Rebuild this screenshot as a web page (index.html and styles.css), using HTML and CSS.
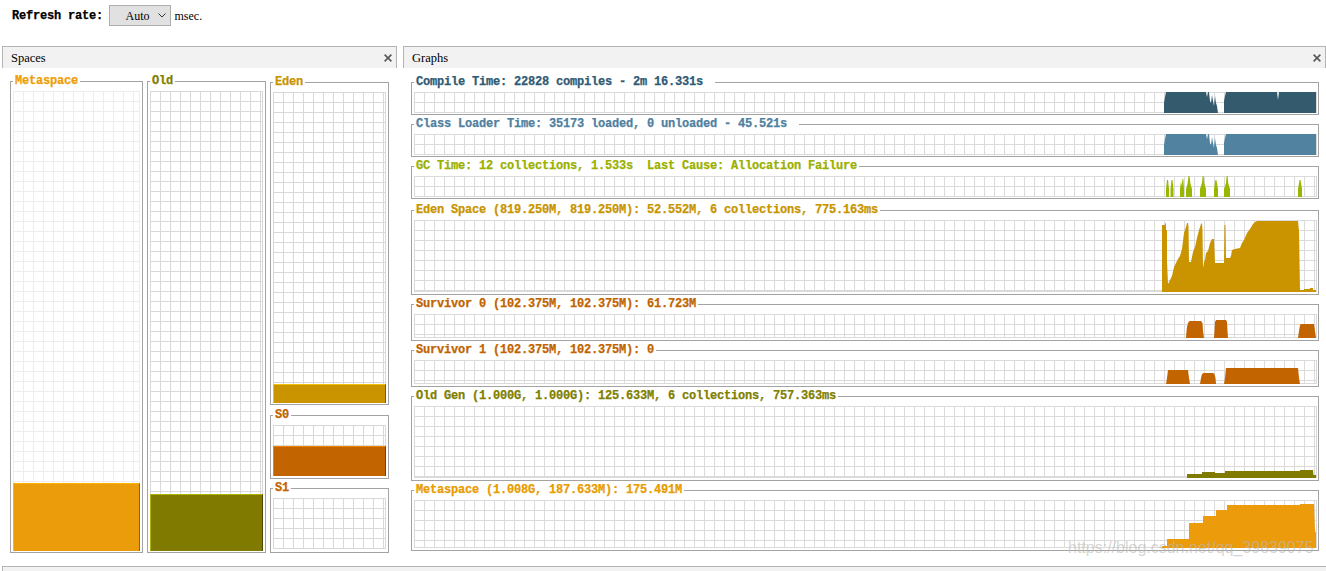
FILE: index.html
```html
<!DOCTYPE html>
<html>
<head>
<meta charset="utf-8">
<title>Visual GC</title>
<link rel="stylesheet" href="styles.css">
</head>
<body>
<div class="toolbar">
  <span class="tb-label">Refresh rate:</span>
  <div class="select"><span class="select-text">Auto</span><svg class="chev" width="8" height="5" viewBox="0 0 8 5"><polyline points="0.5,0.5 4,4 7.5,0.5" fill="none" stroke="#333" stroke-width="1"/></svg></div>
  <span class="unit">msec.</span>
</div>

<div class="panels">
  <section class="panel spaces">
    <div class="ptab"><span>Spaces</span><svg class="close" width="8" height="8" viewBox="0 0 8 8"><path d="M0.6,0.6 L7.4,7.4 M7.4,0.6 L0.6,7.4" stroke="#595959" stroke-width="1.6"/></svg></div>
    <div class="spaces-body">
      <fieldset class="sbox s-meta">
        <legend>Metaspace</legend>
        <div class="sgrid light" style="height:460px"><div class="sfill f-meta" style="height:68px"></div></div>
      </fieldset>
      <fieldset class="sbox s-old">
        <legend>Old</legend>
        <div class="sgrid" style="height:460px"><div class="sfill f-old" style="height:57px"></div></div>
      </fieldset>
      <div class="scol">
        <fieldset class="sbox s-eden">
          <legend>Eden</legend>
          <div class="sgrid" style="height:311px"><div class="sfill f-eden" style="height:19px"></div></div>
        </fieldset>
        <fieldset class="sbox s-s0">
          <legend>S0</legend>
          <div class="sgrid" style="height:51px"><div class="sfill f-s0" style="height:30px"></div></div>
        </fieldset>
        <fieldset class="sbox s-s1">
          <legend>S1</legend>
          <div class="sgrid" style="height:51px"></div>
        </fieldset>
      </div>
    </div>
  </section>

  <section class="panel graphs">
    <div class="ptab"><span>Graphs</span><svg class="close" width="8" height="8" viewBox="0 0 8 8"><path d="M0.6,0.6 L7.4,7.4 M7.4,0.6 L0.6,7.4" stroke="#595959" stroke-width="1.6"/></svg></div>
    <div class="graphs-body">
      <fieldset class="gbox g-compile">
        <legend class="wide">Compile Time: 22828 compiles - 2m 16.331s</legend>
        <div class="ggrid h21">
          <svg class="plot" viewBox="414 92 903 21" preserveAspectRatio="none">
            <polygon fill="#345a6e" points="1164,113 1164,103 1165,97 1166,92 1206,92 1207,97 1208,92 1209,92 1210,101 1211,103 1212,95 1213,101 1214,106 1215,96 1216,103 1217,106 1218,113"/>
            <polygon fill="#345a6e" points="1224,113 1224,101 1225,96 1226,92 1277,92 1278,100 1279,92 1316,92 1316,113"/>
          </svg>
        </div>
      </fieldset>
      <fieldset class="gbox g-class">
        <legend class="wide">Class Loader Time: 35173 loaded, 0 unloaded - 45.521s</legend>
        <div class="ggrid h21">
          <svg class="plot" viewBox="414 134 903 21" preserveAspectRatio="none">
            <polygon fill="#5183a0" points="1164,155 1164,145 1165,139 1166,134 1206,134 1207,139 1208,134 1209,134 1210,143 1211,145 1212,137 1213,143 1214,148 1215,138 1216,145 1217,148 1218,155"/>
            <polygon fill="#5183a0" points="1224,155 1224,143 1225,138 1226,134 1316,134 1316,155"/>
          </svg>
        </div>
      </fieldset>
      <fieldset class="gbox g-gc">
        <legend>GC Time: 12 collections, 1.533s  Last Cause: Allocation Failure</legend>
        <div class="ggrid h21">
          <svg class="plot" viewBox="414 176 903 21" preserveAspectRatio="none">
            <g fill="#9ab700">
              <polygon points="1166,197 1166,189 1167,180 1168,180 1169,189 1169,197"/>
              <polygon points="1170.5,197 1170.5,189 1171.5,180 1172.5,180 1173.5,189 1173.5,197"/>
              <polygon points="1180,197 1180,189 1181,181 1181.6,186 1182.5,179 1183.3,179 1184,189 1184,197"/>
              <polygon points="1186,197 1186,189 1187.5,184 1188.5,176 1189.5,176 1190.5,184 1192,189 1192,197"/>
              <polygon points="1200,197 1200,189 1202,183 1202.6,176 1203.6,176 1204.2,183 1206,189 1206,197"/>
              <polygon points="1214,197 1214,189 1215.4,180 1216.4,180 1218,189 1218,197"/>
              <polygon points="1224,197 1224,189 1226,183 1226.6,176 1227.6,176 1228.2,183 1230,189 1230,197"/>
              <polygon points="1298,197 1298,189 1299.5,180 1300.5,180 1302,189 1302,197"/>
            </g>
          </svg>
        </div>
      </fieldset>
      <fieldset class="gbox g-eden">
        <legend>Eden Space (819.250M, 819.250M): 52.552M, 6 collections, 775.163ms</legend>
        <div class="ggrid h72 thick">
          <svg class="plot" viewBox="414 220 903 72" preserveAspectRatio="none">
            <polygon fill="#c99400" points="1162,292 1162,225 1165,225 1165.5,223 1166,223 1166,230 1167,230 1167,261 1168,284 1170,280 1172,276 1174,267 1176,263 1178,259 1180,256 1182,249 1184,233 1186,227 1187,223 1188,223 1188.5,227 1189,262 1191,262 1193,252 1195,247 1197,238 1199,230 1201,224 1202,223 1202.5,230 1203,268 1204,262 1205,260 1206,253 1208,251 1210,243 1212,239 1214,239 1215,263 1224,263 1224.5,225 1225.5,225 1226,258 1230,258 1231,256 1232,250 1235,249 1240,248 1242,243 1244,240 1247,233 1250,229 1253,224 1255,222 1257,221 1298,221 1299,231 1300,290 1304,290 1304,289 1310,289 1310,288 1313,288 1313,290 1316,290 1316,292"/>
          </svg>
        </div>
      </fieldset>
      <fieldset class="gbox g-surv">
        <legend>Survivor 0 (102.375M, 102.375M): 61.723M</legend>
        <div class="ggrid h24">
          <svg class="plot" viewBox="414 314 903 24" preserveAspectRatio="none">
            <g fill="#c26400">
              <polygon points="1186,338 1186.5,331 1187,327 1188,323 1189.5,321 1201,321 1202.5,323 1203,331 1204,338"/>
              <polygon points="1214,338 1214.5,331 1215,322 1216,320 1226,320 1227,322 1227.5,331 1228,338"/>
              <polygon points="1298,338 1299,331 1300,325 1301,324 1314,324 1315,331 1316,338"/>
            </g>
          </svg>
        </div>
      </fieldset>
      <fieldset class="gbox g-surv">
        <legend>Survivor 1 (102.375M, 102.375M): 0</legend>
        <div class="ggrid h24">
          <svg class="plot" viewBox="414 360 903 24" preserveAspectRatio="none">
            <g fill="#c26400">
              <polygon points="1166,384 1167,378 1168,370 1188,370 1189,378 1190,384"/>
              <polygon points="1200,384 1201,378 1202,374 1203.5,373 1213,373 1214.5,374 1215.5,378 1216,384"/>
              <polygon points="1224,384 1225,378 1226,368 1298,368 1299,378 1300,384"/>
            </g>
          </svg>
        </div>
      </fieldset>
      <fieldset class="gbox g-old">
        <legend>Old Gen (1.000G, 1.000G): 125.633M, 6 collections, 757.363ms</legend>
        <div class="ggrid h72 thick">
          <svg class="plot" viewBox="414 406 903 72" preserveAspectRatio="none">
            <polygon fill="#807b00" points="1187,478 1187,474 1202,474 1202,472 1215,472 1215,473 1225,473 1225,471 1300,471 1300,470 1313,470 1313.5,475 1316,475 1316,478"/>
          </svg>
        </div>
      </fieldset>
      <fieldset class="gbox g-meta">
        <legend>Metaspace (1.008G, 187.633M): 175.491M</legend>
        <div class="ggrid h48">
          <svg class="plot" viewBox="414 500 903 48" preserveAspectRatio="none">
            <polygon fill="#ec9c0a" points="1162,548 1162,546 1167,546 1167,539 1189,539 1189,523 1203,523 1203,516 1216,516 1216,510 1227,510 1227,505 1300,505 1300,504 1314,504 1315,532 1316,532 1316,548"/>
          </svg>
        </div>
      </fieldset>
    </div>
  </section>
</div>
<div class="bottom-tab"></div>
<div class="watermark">https://blog.csdn.net/qq_39839075</div>
</body>
</html>
```
FILE: styles.css
```css
body {
  margin: 0;
  width: 1326px;
  height: 571px;
  overflow: hidden;
  background: #fff;
  position: relative;
  font-family: "Liberation Mono", monospace;
  color: #000;
}

/* toolbar */
.toolbar {
  display: flex;
  align-items: center;
  height: 31px;
  padding-left: 12px;
}
.tb-label {
  font: bold 12px/14px "Liberation Mono", monospace;
  letter-spacing: -0.2px;
  -webkit-text-stroke: 0.25px currentColor;
  margin-right: 5.5px;
}
.select {
  box-sizing: border-box;
  width: 62px;
  height: 21px;
  border: 1px solid #adadad;
  background: #e1e1e1;
  display: flex;
  align-items: center;
  padding-left: 16px;
}
.select-text {
  font: 12px/14px "Liberation Serif", serif;
}
.chev {
  display: block;
  margin-left: 8px;
}
.unit {
  margin-left: 4px;
  font: 12px/14px "Liberation Serif", serif;
}

/* panels */
.panels {
  display: flex;
  gap: 6px;
  margin: 15px 0 0 2px;
  height: 520px;
}
.panel {
  display: flex;
  flex-direction: column;
}
.spaces { width: 395px; }
.graphs { width: 923px; }
.ptab {
  box-sizing: border-box;
  height: 22px;
  border: 1px solid #b4b4b4;
  border-bottom: 0;
  background: #f2f2f2;
  display: flex;
  align-items: center;
  justify-content: space-between;
  padding: 0 4px 0 8px;
  font: 12.5px/14px "Liberation Serif", serif;
}
.close { display: block; }

.bottom-tab {
  margin-left: 2px;
  height: 10px;
  border-top: 1px solid #b4b4b4;
  border-left: 1px solid #b4b4b4;
  background: #f2f2f2;
}

/* fieldsets */
fieldset {
  margin: 0;
  border: 1px solid #a3a3a3;
  min-width: 0;
  box-sizing: border-box;
}
legend {
  padding: 0 2px;
  font: bold 12px/15px "Liberation Mono", monospace;
  letter-spacing: -0.2px;
  -webkit-text-stroke: 0.25px currentColor;
  white-space: pre;
}
legend.wide { padding-right: 12px; }

/* spaces */
.spaces-body {
  display: flex;
  gap: 4px;
  padding: 6px 0 0 8px;
}
.sbox { padding: 2px 2px 1px 2px; }
.s-meta { width: 133px; }
.s-old { width: 119px; }
.scol {
  width: 119px;
  padding-top: 1px;
  display: flex;
  flex-direction: column;
}
.scol .sbox { width: 119px; }
.s-s0 { margin-top: 3px; padding-bottom: 2px; }
.s-s1 { margin-top: 2px; padding-bottom: 3px; }

.s-meta legend { color: #ee9e05; }
.s-old legend { color: #808000; }
.s-eden legend { color: #c89400; }
.s-s0 legend, .s-s1 legend { color: #c06400; }

.sgrid {
  box-sizing: border-box;
  display: flex;
  flex-direction: column;
  justify-content: flex-end;
  background-image:
    linear-gradient(to right, #d8d8d8 1px, transparent 1px),
    linear-gradient(to bottom, #d8d8d8 1px, transparent 1px);
  background-size: 10px 10px;
  box-shadow: inset -1px -1px 0 #d8d8d8;
}
.sgrid.light {
  background-image:
    linear-gradient(to right, #ededed 1px, transparent 1px),
    linear-gradient(to bottom, #ededed 1px, transparent 1px);
  box-shadow: inset -1px -1px 0 #ededed;
}
.sfill {
  box-sizing: border-box;
  width: 100%;
  border-top: 1px solid;
  border-left: 1px solid;
  border-right: 1px solid;
}
.f-meta { background: #eb9c0a; border-top-color: #f7b500; border-left-color: #f7b500; border-right-color: #9a6000; }
.f-old { background: #807b00; border-top-color: #b2b200; border-left-color: #b2b200; border-right-color: #4e4b00; }
.f-eden { background: #c99400; border-top-color: #f2c000; border-left-color: #f2c000; border-right-color: #7e5c00; }
.f-s0 { background: #c26400; border-top-color: #f08400; border-left-color: #f08400; border-right-color: #7a3e00; }

/* graphs */
.graphs-body {
  padding: 7px 7px 0 8px;
}
.gbox { padding: 2px 1px 1px 2px; margin-top: 2px; }
.g-compile { margin-top: 0; }
.g-eden { margin-top: 4px; }
.g-eden, .g-surv, .g-old, .g-meta { padding-bottom: 2px; }

.g-compile legend { color: #2f5a74; }
.g-class legend { color: #4f80a0; }
.g-gc legend { color: #9ab000; }
.g-eden legend { color: #c89400; }
.g-surv legend { color: #c06400; }
.g-old legend { color: #808000; }
.g-meta legend { color: #e89c00; }

.ggrid {
  box-sizing: border-box;
  background-image:
    linear-gradient(to right, #dadada 1px, transparent 1px),
    linear-gradient(to bottom, #dadada 1px, transparent 1px);
  background-size: 10px 10px;
  box-shadow: inset -1px -1px 0 #dadada;
}
.ggrid.thick { box-shadow: inset -1px -2px 0 #dadada; }
.h21 { height: 21px; }
.h24 { height: 24px; }
.h48 { height: 48px; }
.h72 { height: 72px; }
.plot {
  display: block;
  width: 100%;
  height: 100%;
}

.watermark {
  position: absolute;
  left: 1068px;
  top: 538px;
  font: 16px/20px "Liberation Sans", sans-serif;
  color: rgba(185, 185, 185, 0.6);
  white-space: nowrap;
}
```
